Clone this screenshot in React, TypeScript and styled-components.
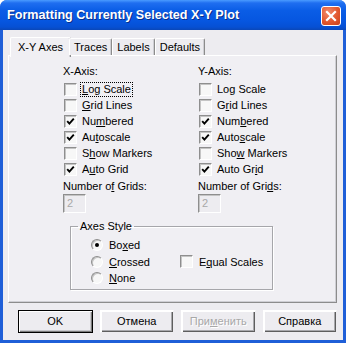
import React from 'react';
import styled, { createGlobalStyle } from 'styled-components';

const GlobalStyle = createGlobalStyle`
  html, body {
    margin: 0;
    padding: 0;
    background: #ffffff;
  }
  body {
    font-family: "Liberation Sans", Arial, sans-serif;
    font-size: 11px;
    color: #000;
  }
`;

const Window = styled.div`
  width: 346px;
  height: 343px;
  display: flex;
  flex-direction: column;
  border-radius: 7px 7px 0 0;
  overflow: hidden;
  background: #1f5fd8;
`;

const TitleBar = styled.div`
  height: 30px;
  flex: none;
  display: flex;
  align-items: center;
  justify-content: space-between;
  padding: 0 5px 0 7px;
  box-sizing: border-box;
  background: linear-gradient(
    180deg,
    #4a9bff 0%,
    #1f6ef0 10%,
    #0a5de6 35%,
    #0656e0 70%,
    #0650d4 90%,
    #0a47b8 100%
  );
`;

const Title = styled.span`
  font-family: "Liberation Sans", Arial, sans-serif;
  font-weight: bold;
  font-size: 12.6px;
  color: #fff;
  text-shadow: 1px 1px 0 #0a2f8a;
`;

const CloseButton = styled.div`
  width: 20px;
  height: 20px;
  box-sizing: border-box;
  border: 1px solid #fff;
  border-radius: 3px;
  background: radial-gradient(circle at 35% 30%, #f08a6c 0%, #e2582f 55%, #c9401a 100%);
  display: flex;
  align-items: center;
  justify-content: center;
  margin-top: 1px;
`;

const Body = styled.div`
  flex: 1;
  display: flex;
  flex-direction: column;
  margin: 0 3px 3px 3px;
  padding: 7px 6px 7px 5px;
  background: #edecf0;
`;

const TabStrip = styled.div`
  height: 18px;
  display: flex;
  align-items: flex-end;
  padding-left: 4px;
  position: relative;
  z-index: 1;
`;

const Tab = styled.div<{ $active?: boolean }>`
  box-sizing: border-box;
  height: ${(p) => (p.$active ? '20px' : '17px')};
  margin: ${(p) => (p.$active ? '0 -2px -2px -2px' : '0 0 0 0')};
  padding: ${(p) => (p.$active ? '3px 7px 0 7px' : '2px 4px 0 4px')};
  background: ${(p) => (p.$active ? '#f0eff3' : '#edecf0')};
  border-top: 1px solid #fff;
  border-left: 1px solid #fff;
  border-right: 1px solid #8c8c8c;
  box-shadow: inset -1px 0 0 #cfcfd4;
  border-radius: 2px 2px 0 0;
  white-space: nowrap;
  line-height: 13px;
`;

const Panel = styled.div`
  height: 248px;
  box-sizing: border-box;
  border-top: 1px solid #fff;
  border-left: 1px solid #fff;
  border-right: 1px solid #8c8c8c;
  border-bottom: 1px solid #8c8c8c;
  box-shadow: inset -1px -1px 0 #cfcfd4;
  background: #f0eff3;
  padding: 8px 0 0 54px;
`;

const Columns = styled.div`
  display: grid;
  grid-template-columns: 135px 135px;
`;

const Column = styled.div`
  display: flex;
  flex-direction: column;
`;

const Caption = styled.div<{ $gap?: number }>`
  line-height: 14px;
  height: 14px;
  margin-top: ${(p) => p.$gap ?? 0}px;
  white-space: nowrap;
`;

const CheckRow = styled.label`
  display: flex;
  align-items: center;
  height: 16px;
  padding-left: 1px;
  gap: 5px;
  white-space: nowrap;
`;

const Box = styled.span`
  width: 13px;
  height: 13px;
  flex: none;
  box-sizing: border-box;
  border-style: solid;
  border-width: 1px;
  border-color: #8e8e8e #ffffff #ffffff #8e8e8e;
  box-shadow: inset 1px 1px 0 #c4c4c4;
  background: #f7f7f7;
  display: flex;
  align-items: center;
  justify-content: center;
`;

const RowText = styled.span<{ $focus?: boolean }>`
  line-height: 13px;
  padding: 0 1px;
  margin-left: -1px;
  outline: ${(p) => (p.$focus ? '1px dotted #000' : 'none')};
`;

const NumberField = styled.div`
  width: 23px;
  height: 19px;
  margin-top: 1px;
  box-sizing: border-box;
  border-style: solid;
  border-width: 1px;
  border-color: #8e8e8e #ffffff #ffffff #8e8e8e;
  box-shadow: inset 1px 1px 0 #c4c4c4;
  background: #edecf0;
  color: #a8a8a8;
  padding: 2px 0 0 3px;
  line-height: 13px;
`;

const GroupBox = styled.fieldset`
  margin: 6px 0 0 7px;
  width: 203px;
  height: 71px;
  box-sizing: border-box;
  padding: 4px 0 0 20px;
  border: 1px solid #a6a6aa;
  box-shadow: 1px 1px 0 #fff, inset 1px 1px 0 #fff;
  border-radius: 0;
  display: grid;
  grid-template-columns: 89px auto;
  grid-template-rows: 16.5px 16.5px 16.5px;
  align-content: start;
`;

const Legend = styled.legend`
  padding: 0 2px;
  margin-left: -13px;
  line-height: 14px;
`;

const RadioCircle = styled.span`
  width: 12px;
  height: 12px;
  flex: none;
  box-sizing: border-box;
  border-radius: 50%;
  border-style: solid;
  border-width: 1px;
  border-color: #8e8e8e #ffffff #ffffff #8e8e8e;
  box-shadow: inset 1px 1px 0 #c4c4c4;
  background: #f7f7f7;
  display: flex;
  align-items: center;
  justify-content: center;
`;

const Dot = styled.span`
  width: 4px;
  height: 4px;
  border-radius: 50%;
  background: #000;
`;

const RadioRow = styled.label<{ $row: number }>`
  grid-column: 1;
  grid-row: ${(p) => p.$row};
  display: flex;
  align-items: center;
  gap: 6px;
  white-space: nowrap;
`;

const GroupCheck = styled(CheckRow)`
  grid-column: 2;
  grid-row: 2;
  height: auto;
  padding-left: 0;
  gap: 6px;
`;

const ButtonRow = styled.div`
  display: flex;
  gap: 7px;
  margin-top: 7px;
  padding-left: 10px;
`;

const Button = styled.div<{ $default?: boolean; $disabled?: boolean }>`
  width: 75px;
  height: 23px;
  box-sizing: border-box;
  display: flex;
  align-items: center;
  justify-content: center;
  background: #edecf0;
  border: 1px solid ${(p) => (p.$default ? '#000' : 'transparent')};
  box-shadow: ${(p) =>
    p.$default
      ? 'inset 1px 1px 0 #fff, inset -1px -1px 0 #7a7a7a, inset -2px -2px 0 #c7c7cb'
      : 'inset 1px 1px 0 #fff, inset -1px -1px 0 #5e5e5e, inset -2px -2px 0 #a8a8ac'};
  color: ${(p) => (p.$disabled ? '#a8a8a8' : '#000')};
  text-shadow: ${(p) => (p.$disabled ? '1px 1px 0 #fff' : 'none')};
  line-height: 13px;
  ${(p) => (!p.$default ? 'border-top-color: #fff; border-left-color: #fff;' : '')}
`;

const Check = () => (
  <svg width="9" height="9" viewBox="0 0 9 9">
    <polyline points="1.2,4.2 3.4,6.6 7.8,1.6" fill="none" stroke="#000" strokeWidth="1.9" />
  </svg>
);

type Item = { pre: string; key: string; post: string; checked: boolean };

const xItems: Item[] = [
  { pre: '', key: 'L', post: 'og Scale', checked: false },
  { pre: '', key: 'G', post: 'rid Lines', checked: false },
  { pre: 'Nu', key: 'm', post: 'bered', checked: true },
  { pre: 'Au', key: 't', post: 'oscale', checked: true },
  { pre: 'S', key: 'h', post: 'ow Markers', checked: false },
  { pre: 'A', key: 'u', post: 'to Grid', checked: true },
];

const yItems: Item[] = [
  { pre: 'Lo', key: 'g', post: ' Scale', checked: false },
  { pre: 'G', key: 'r', post: 'id Lines', checked: false },
  { pre: 'Num', key: 'b', post: 'ered', checked: true },
  { pre: 'Auto', key: 's', post: 'cale', checked: true },
  { pre: 'Sho', key: 'w', post: ' Markers', checked: false },
  { pre: 'Auto Gr', key: 'i', post: 'd', checked: true },
];

const ItemList = styled.div`
  margin-top: 3px;
  display: flex;
  flex-direction: column;
`;

const AxisColumn: React.FC<{ title: string; items: Item[]; grids: [string, string, string]; focusFirst?: boolean }> = ({
  title,
  items,
  grids,
  focusFirst,
}) => (
  <Column>
    <Caption>{title}</Caption>
    <ItemList>
      {items.map((it, i) => (
        <CheckRow key={i}>
          <Box>{it.checked && <Check />}</Box>
          <RowText $focus={focusFirst && i === 0}>
            {it.pre}
            <u>{it.key}</u>
            {it.post}
          </RowText>
        </CheckRow>
      ))}
    </ItemList>
    <Caption $gap={2}>
      {grids[0]}
      <u>{grids[1]}</u>
      {grids[2]}
    </Caption>
    <NumberField>2</NumberField>
  </Column>
);

const App: React.FC = () => {
  return (
    <>
      <GlobalStyle />
      <Window>
        <TitleBar>
          <Title>Formatting Currently Selected X-Y Plot</Title>
          <CloseButton>
            <svg width="12" height="12" viewBox="0 0 12 12">
              <path d="M2 2 L10 10 M10 2 L2 10" stroke="#fff" strokeWidth="2.2" strokeLinecap="square" />
            </svg>
          </CloseButton>
        </TitleBar>
        <Body>
          <TabStrip>
            <Tab $active>X-Y Axes</Tab>
            <Tab>Traces</Tab>
            <Tab>Labels</Tab>
            <Tab>Defaults</Tab>
          </TabStrip>
          <Panel>
            <Columns>
              <AxisColumn title="X-Axis:" items={xItems} grids={['Number o', 'f', ' Grids:']} focusFirst />
              <AxisColumn title="Y-Axis:" items={yItems} grids={['Number of Gri', 'd', 's:']} />
            </Columns>
            <GroupBox>
              <Legend>Axes Style</Legend>
              <RadioRow $row={1}>
                <RadioCircle>
                  <Dot />
                </RadioCircle>
                <span>
                  Bo<u>x</u>ed
                </span>
              </RadioRow>
              <RadioRow $row={2}>
                <RadioCircle />
                <span>
                  <u>C</u>rossed
                </span>
              </RadioRow>
              <RadioRow $row={3}>
                <RadioCircle />
                <span>
                  <u>N</u>one
                </span>
              </RadioRow>
              <GroupCheck>
                <Box />
                <span>
                  E<u>q</u>ual Scales
                </span>
              </GroupCheck>
            </GroupBox>
          </Panel>
          <ButtonRow>
            <Button $default>OK</Button>
            <Button>Отмена</Button>
            <Button $disabled>
              <span>
                При<u>м</u>енить
              </span>
            </Button>
            <Button>Справка</Button>
          </ButtonRow>
        </Body>
      </Window>
    </>
  );
};

export default App;
